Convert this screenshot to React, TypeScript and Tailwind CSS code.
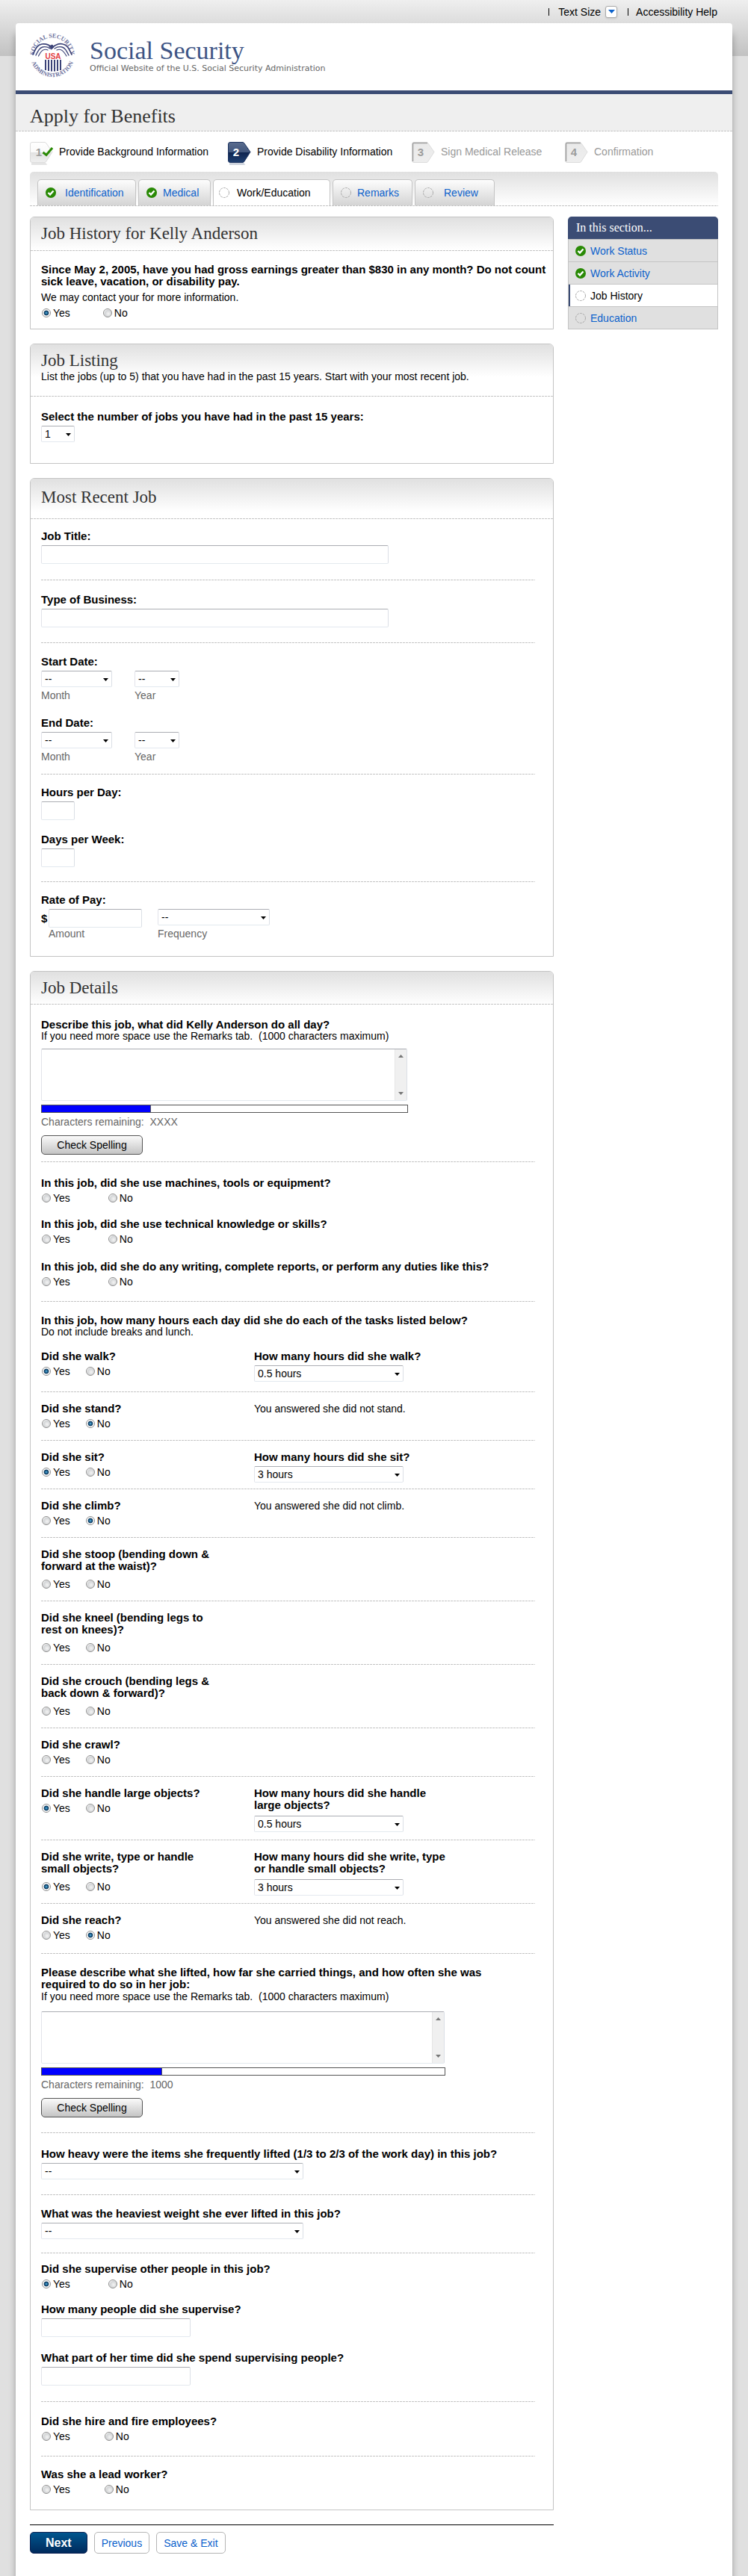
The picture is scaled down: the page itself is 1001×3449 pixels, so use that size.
import React, { useId } from "react";

const cx = (...parts: (string | undefined | false)[]) => parts.filter(Boolean).join(" ");

const DASH = "h-px bg-[repeating-linear-gradient(90deg,#c4c4c4_0_3px,transparent_3px_4px)]";
const BOX =
  "rounded-[2px] border border-t-[#abadb3] border-r-[#dbdfe6] border-b-[#e3e9ef] border-l-[#e2e3ea] bg-white";

function Rule({ className }: { className?: string }) {
  return <div role="separator" className={cx(DASH, className)} />;
}

function Logo() {
  return (
    <svg viewBox="0 0 70 70" className="size-[70px] shrink-0" role="img" aria-label="Social Security Administration seal">
      <defs>
        <path id="sealTop" d="M9.5 35 A24.5 24.5 0 0 1 58.5 35" />
        <path id="sealBottom" d="M4.5 35 A29.8 29.8 0 0 0 64 35" />
      </defs>
      <g fontFamily="Liberation Serif, serif" fontWeight="700" fontSize="8" fill="#6b6f9c">
        <text>
          <textPath href="#sealTop" startOffset="50%" textAnchor="middle">SOCIAL SECURITY</textPath>
        </text>
        <text>
          <textPath href="#sealBottom" startOffset="50%" textAnchor="middle">ADMINISTRATION</textPath>
        </text>
      </g>
      <g stroke="#3c4378" fill="none" strokeLinecap="round">
        <path d="M8 33 C12 25 14 20 20 19 C26 18 30 20 34 24 C38 20 43 18 48 19 C54 20 56 25 60 33" strokeWidth="1.700" />
        <path d="M12 34 C15 28 17 24 21 23 C25 22 28 23 31 25" strokeWidth="1.4" />
        <path d="M15.500 35 C18 30 20 27 23 26.500 C25 26 27 26.500 28 27" strokeWidth="1.200" />
        <path d="M56 34 C53 28 51 24 47 23 C43 22 40 23 37 25" strokeWidth="1.4" />
        <path d="M53 35 C50 30 48 27 45 26.500 C43 26 41 26.500 40 27" strokeWidth="1.200" />
        <path d="M30 22 L34 20 L36 23 L33 26 Z" fill="#3c4378" strokeWidth="1" />
      </g>
      <g fill="#3c4378">
        <path d="M24 40 h2 v14 h-2z M28 40 h2 v15 h-2z M32 40 h2 v15.500 h-2z M36 40 h2 v15.500 h-2z M40 40 h2 v15 h-2z M44 40 h2 v14 h-2z" />
      </g>
      <text x="35" y="38.500" textAnchor="middle" fontFamily="Liberation Sans, sans-serif" fontWeight="700" fontSize="10" fill="#e23b3f">
        USA
      </text>
    </svg>
  );
}

function DoneIcon() {
  return (
    <svg viewBox="0 0 14 14" className="size-3.5 shrink-0" aria-hidden="true">
      <circle cx="7" cy="7" r="7" fill="#2a8a06" />
      <path d="M3.500 7 L6 9.500 L10.500 4.500" fill="none" stroke="#fff" strokeWidth="2.400" />
    </svg>
  );
}

function PendingIcon() {
  return (
    <svg viewBox="0 0 14 14" className="size-3.5 shrink-0" aria-hidden="true">
      <circle cx="7" cy="7" r="6.500" fill="none" stroke="#aaa" strokeDasharray="3 1.100" />
    </svg>
  );
}

type StepState = "done" | "current" | "todo";

function StepIcon({ n, state }: { n: number; state: StepState }) {
  const id = "step" + n;
  const current = state === "current";
  return (
    <svg viewBox="0 0 31 31" className="size-[31px] shrink-0" aria-hidden="true">
      <defs>
        <linearGradient id={id} x1="0" y1="0" x2="0" y2="1">
          <stop offset="0" stopColor={current ? "#5a6c8e" : state === "done" ? "#fff" : "#e9e9e9"} />
          <stop offset=".5" stopColor={current ? "#40557c" : state === "done" ? "#fafafa" : "#ececec"} />
          <stop offset=".51" stopColor={current ? "#0f2550" : state === "done" ? "#e2e2e2" : "#ececec"} />
          <stop offset="1" stopColor={current ? "#1f3f70" : state === "done" ? "#f0f0f0" : "#eee"} />
        </linearGradient>
      </defs>
      {state !== "todo" && <path d="M2 28.500 H21 L23.500 30.500 H2 Z" fill={current ? "#b9c1cf" : "#d9d9d9"} />}
      <path
        d="M3 .5 H20 L21.500 1.300 L30 13.500 L21.500 26.700 L20 27.500 H3 Q.5 27.500 .5 25 V3 Q.5 .5 3 .5 Z"
        fill={`url(#${id})`}
        stroke={current ? "#1d3460" : "#dcdcdc"}
      />
      {state === "todo" && <path d="M21 1.500 H2.500 Q1.500 1.500 1.500 3 V26" fill="none" stroke="#a3a3a3" strokeWidth="1.600" />}
      <text
        x={state === "current" ? 11 : 12}
        y="19"
        textAnchor="middle"
        fontFamily="Liberation Sans, sans-serif"
        fontWeight="700"
        fontSize="15"
        fill={current ? "#fff" : "#9c9c9c"}
      >
        {n}
      </text>
      {state === "done" && <path d="M17.500 14 L22 17.500 L30 8" fill="none" stroke="#2a8a06" strokeWidth="3" />}
    </svg>
  );
}

function Radio({ name, value, checked }: { name: string; value: string; checked?: boolean }) {
  return (
    <label className="flex items-center gap-[3px]">
      <input
        type="radio"
        name={name}
        value={value}
        defaultChecked={checked}
        className="size-3 appearance-none rounded-full border border-[#8f8f8f] bg-[radial-gradient(circle_at_60%_60%,#f4f4f4_0%,#d2d4d6_55%,#fff_75%)] checked:bg-[radial-gradient(circle,#5cc0ee_0,#1c5a86_25%,#10395c_45%,#f4f4f4_52%,#fff_70%)]"
      />
      {value}
    </label>
  );
}

function YesNo({ label, answer, gap }: { label: string; answer?: "Yes" | "No"; gap: string }) {
  const name = useId();
  return (
    <div role="radiogroup" aria-label={label} className={cx("flex h-5 items-center pl-px", gap)}>
      <Radio name={name} value="Yes" checked={answer === "Yes"} />
      <Radio name={name} value="No" checked={answer === "No"} />
    </div>
  );
}

function Question({ text, answer, gap, className }: { text: string; answer?: "Yes" | "No"; gap: string; className?: string }) {
  return (
    <div className={cx("flex flex-col gap-0.5", className)}>
      <p className="text-[15px] leading-4 font-bold">{text}</p>
      <YesNo label={text} answer={answer} gap={gap} />
    </div>
  );
}

function Select({ id, value, width, label }: { id?: string; value: string; width: string; label?: string }) {
  return (
    <div className={cx("relative", width)}>
      <select id={id} aria-label={label} defaultValue={value} className={cx(BOX, "block h-[22px] w-full appearance-none pl-1 text-sm leading-5")}>
        <option>{value}</option>
      </select>
      <svg viewBox="0 0 7 4" className="pointer-events-none absolute top-[10px] right-[5px] h-1 w-[7px]" aria-hidden="true">
        <path d="M0 0 H7 L3.500 4 Z" />
      </svg>
    </div>
  );
}

function Label({ htmlFor, children }: { htmlFor?: string; children: React.ReactNode }) {
  return (
    <label htmlFor={htmlFor} className="block text-[15px] leading-4 font-bold">
      {children}
    </label>
  );
}

function TextField({ label, width }: { label: string; width: string }) {
  const id = useId();
  return (
    <div className="flex flex-col gap-1">
      <Label htmlFor={id}>{label}</Label>
      <input id={id} type="text" className={cx(BOX, "h-[25px] px-1", width)} />
    </div>
  );
}

function SelectField({ label, value, width, className }: { label: string; value: string; width: string; className?: string }) {
  const id = useId();
  return (
    <div className={cx("flex flex-col gap-1", className)}>
      <Label htmlFor={id}>{label}</Label>
      <Select id={id} value={value} width={width} />
    </div>
  );
}

function Captioned({ value, width, caption, group }: { value: string; width: string; caption: string; group: string }) {
  return (
    <div className="flex flex-col gap-[3px]">
      <Select value={value} width={width} label={group + " " + caption} />
      <span className="leading-4 text-[#666]">{caption}</span>
    </div>
  );
}

function DateField({ label }: { label: string }) {
  return (
    <fieldset>
      <legend className="mb-1 text-[15px] leading-4 font-bold">{label}</legend>
      <div className="flex gap-[30px]">
        <Captioned group={label} value="--" width="w-[95px]" caption="Month" />
        <Captioned group={label} value="--" width="w-[60px]" caption="Year" />
      </div>
    </fieldset>
  );
}

function LongAnswer({ label, remaining, width, fill }: { label: string; remaining: string; width: string; fill: string }) {
  return (
    <div className={cx("max-w-full", width)}>
      <div className={cx(BOX, "mr-px flex h-[70px]")}>
        <textarea aria-label={label} className="block flex-1 resize-none px-1 outline-none" />
        <div className="flex w-4 flex-col items-center justify-between border-l border-[#e6e6e6] bg-[#f0f0f0] py-[7px]">
          <svg viewBox="0 0 7 4" className="h-1 w-[7px]" aria-hidden="true">
            <path d="M0 4 H7 L3.500 0 Z" fill="#777" />
          </svg>
          <svg viewBox="0 0 7 4" className="h-1 w-[7px]" aria-hidden="true">
            <path d="M0 0 H7 L3.500 4 Z" fill="#777" />
          </svg>
        </div>
      </div>
      <div className="mt-[5px] h-[11px] border border-[#555] bg-white">
        <div className={cx("h-full border-r border-[#555] bg-[#0000ff]", fill)} />
      </div>
      <p className="mt-1 leading-4 whitespace-pre text-[#666]">{"Characters remaining:  " + remaining}</p>
      <button
        type="button"
        className="mt-2.5 block h-[26px] w-[136px] rounded-[5px] border border-[#555] bg-[linear-gradient(#fafafa,#c4c4c4)] text-sm leading-none"
      >
        Check Spelling
      </button>
    </div>
  );
}

function Panel({ title, note, head, children }: { title: string; note?: string; head: string; children: React.ReactNode }) {
  return (
    <section className="rounded-t-[6px] border border-[#c4c4c4] bg-white">
      <header className={cx("rounded-t-[5px] bg-[linear-gradient(#e0e0e0,#fff_44px)] px-3.5", head)}>
        <h2 className="font-[Liberation_Serif,serif] text-[23px] leading-[26px] text-[#333]">{title}</h2>
        {note && <p className="leading-4">{note}</p>}
      </header>
      <Rule />
      <div className="pr-6 pl-3.5">{children}</div>
    </section>
  );
}

type Task = {
  question: string;
  answer?: "Yes" | "No";
  follow?: string;
  hours?: string;
  reply?: string;
  height?: string;
};

const tasks: Task[] = [
  { question: "Did she walk?", answer: "Yes", follow: "How many hours did she walk?", hours: "0.5 hours", height: "min-h-[69px]" },
  { question: "Did she stand?", answer: "No", reply: "You answered she did not stand." },
  { question: "Did she sit?", answer: "Yes", follow: "How many hours did she sit?", hours: "3 hours" },
  { question: "Did she climb?", answer: "No", reply: "You answered she did not climb." },
  { question: "Did she stoop (bending down &\nforward at the waist)?" },
  { question: "Did she kneel (bending legs to\nrest on knees)?" },
  { question: "Did she crouch (bending legs &\nback down & forward)?" },
  { question: "Did she crawl?" },
  { question: "Did she handle large objects?", answer: "Yes", follow: "How many hours did she handle\nlarge objects?", hours: "0.5 hours" },
  { question: "Did she write, type or handle\nsmall objects?", answer: "Yes", follow: "How many hours did she write, type\nor handle small objects?", hours: "3 hours" },
  { question: "Did she reach?", answer: "No", reply: "You answered she did not reach.", height: "min-h-[66px]" },
];

function TaskRow({ question, answer, follow, hours, reply, height }: Task) {
  const id = useId();
  const twoLines = question.includes("\n") || !!follow?.includes("\n");
  return (
    <>
      <div className={cx("grid grid-cols-[285px_1fr] content-start pt-3.5", height ?? (twoLines ? "min-h-[84px]" : "min-h-16"))}>
        <div className={cx("flex flex-col", question.includes("\n") ? "gap-1.5" : "gap-0.5")}>
          <p className="text-[15px] leading-4 font-bold whitespace-pre-line">{question}</p>
          <YesNo label={question} answer={answer} gap="gap-[21px]" />
        </div>
        {follow && hours && (
          <div className={cx("flex flex-col", twoLines ? "gap-1.5" : "gap-1")}>
            <label htmlFor={id} className="text-[15px] leading-4 font-bold whitespace-pre-line">
              {follow}
            </label>
            <Select id={id} value={hours} width="w-[200px]" />
          </div>
        )}
        {reply && <p className="leading-4">{reply}</p>}
      </div>
      <Rule />
    </>
  );
}

const steps: { label: string; state: StepState; width: string }[] = [
  { label: "Provide Background Information", state: "done", width: "w-[265px]" },
  { label: "Provide Disability Information", state: "current", width: "w-[246px]" },
  { label: "Sign Medical Release", state: "todo", width: "w-[205px]" },
  { label: "Confirmation", state: "todo", width: "w-[130px]" },
];

const tabs = [
  { label: "Identification", done: true, box: "w-[132px] gap-3 pl-2.5" },
  { label: "Medical", done: true, box: "w-[97px] gap-2 pl-2.5" },
  { label: "Work/Education", active: true, box: "w-[157px] gap-2.5 pl-[7px]" },
  { label: "Remarks", box: "w-[107px] gap-2 pl-2.5" },
  { label: "Review", box: "w-[107px] gap-3.5 pl-2.5" },
];

const sections = [
  { label: "Work Status", done: true },
  { label: "Work Activity", done: true },
  { label: "Job History", active: true },
  { label: "Education" },
];

export default function App() {
  return (
    <div className="min-h-screen bg-[#e0e0e0] bg-[linear-gradient(#efefef,#c2c2c2)] bg-[length:100%_75px] bg-no-repeat px-[21px] font-[Liberation_Sans,Arial,sans-serif] text-sm text-black">
      <nav aria-label="Page tools" className="flex h-[31px] items-center justify-end pr-5">
        <span className="h-2.5 w-px bg-black" />
        <button type="button" className="ml-3 flex items-center gap-1.5">
          Text Size
          <span className="flex h-4 w-4 items-center justify-center rounded-[3px] border border-[#aaa] bg-white shadow-sm">
            <svg viewBox="0 0 9 5" className="h-[5px] w-[9px]" aria-hidden="true">
              <path d="M0 0 H9 L4.500 5 Z" fill="#0b62cc" />
            </svg>
          </span>
        </button>
        <span className="mr-2.5 ml-3.5 h-2.5 w-px bg-black" />
        <a href="#help">Accessibility Help</a>
      </nav>

      <div className="min-h-[calc(100vh-31px)] rounded-t-[4px] bg-white pb-[30px] shadow-[0_14px_10px_rgba(0,0,0,0.3)]">
        <header className="flex h-[90px] pt-[9px] pl-[15px]">
          <Logo />
          <div className="pt-[11px] pl-3.5">
            <p className="font-[Liberation_Serif,serif] text-[34px] leading-[34px] text-[#3d5485]">Social Security</p>
            <p className="font-[DejaVu_Sans,Verdana,sans-serif] text-[11px] leading-[14px] text-[#666]">
              Official Website of the U.S. Social Security Administration
            </p>
          </div>
        </header>
        <div className="h-[5px] bg-[#3b4c74]" />
        <div className="flex h-[49px] items-center bg-[#efefef] pt-2.5 pl-[19px]">
          <h1 className="font-[Liberation_Serif,serif] text-[26px] leading-8 text-[#333]">Apply for Benefits</h1>
        </div>
        <Rule />

        <div className="px-[19px]">
          <ol className="flex pt-3.5">
            {steps.map((s, i) => (
              <li key={s.label} className={cx("flex h-[31px] gap-2", s.width, s.state === "todo" && "text-[#999]")}>
                <StepIcon n={i + 1} state={s.state} />
                <span className="pt-1 leading-[18px] whitespace-nowrap">{s.label}</span>
              </li>
            ))}
          </ol>

          <nav aria-label="Application sections" className="mt-[9px] rounded-t-[5px] bg-[linear-gradient(#e0e0e0,#fff)] pt-2.5 pl-2.5">
            <div className="flex gap-[3px]">
              {tabs.map((t) => (
                <a
                  key={t.label}
                  href={"#" + t.label}
                  aria-current={t.active ? "page" : undefined}
                  className={cx(
                    "flex h-[35px] items-center rounded-t-[5px] border border-b-0 border-[#c4c4c4]",
                    t.box,
                    t.active ? "bg-white text-black" : "bg-[linear-gradient(#fdfdfd,#d4d4d4)] text-[#0b62cc]"
                  )}
                >
                  {t.done ? <DoneIcon /> : <PendingIcon />}
                  {t.label}
                </a>
              ))}
            </div>
          </nav>
          <Rule />

          <div className="mt-3.5 flex items-start justify-between gap-[19px]">
            <main className="flex max-w-[701px] flex-1 flex-col gap-[19px]">
              <Panel title="Job History for Kelly Anderson" head="h-11 pt-[9px]">
                <div className="-mr-5 pt-[17px] pb-[11px]">
                  <p className="text-[15px] leading-4 font-bold">
                    Since May 2, 2005, have you had gross earnings greater than $830 in any month? Do not count
                    <br />
                    sick leave, vacation, or disability pay.
                  </p>
                  <p className="mt-[3px] leading-5">We may contact your for more information.</p>
                  <div className="mt-px">
                    <YesNo label="Gross earnings" answer="Yes" gap="gap-[44px]" />
                  </div>
                </div>
              </Panel>

              <Panel title="Job Listing" note="List the jobs (up to 5) that you have had in the past 15 years. Start with your most recent job." head="h-[69px] pt-[9px]">
                <div className="pt-[19px] pb-[28px]">
                  <SelectField label="Select the number of jobs you have had in the past 15 years:" value="1" width="w-[45px]" />
                </div>
              </Panel>

              <Panel title="Most Recent Job" head="h-[53px] pt-3">
                <div className="pt-[15px] pb-[22px]">
                  <TextField label="Job Title:" width="w-[465px]" />
                  <Rule className="mt-[21px] mb-[18px]" />
                  <TextField label="Type of Business:" width="w-[465px]" />
                  <Rule className="mt-5 mb-[17px]" />
                  <div className="flex flex-col gap-[21px]">
                    <DateField label="Start Date:" />
                    <DateField label="End Date:" />
                  </div>
                  <Rule className="mt-[15px] mb-4" />
                  <div className="flex flex-col gap-[18px]">
                    <TextField label="Hours per Day:" width="w-[45px]" />
                    <TextField label="Days per Week:" width="w-[45px]" />
                  </div>
                  <Rule className="mt-[19px] mb-4" />
                  <fieldset>
                    <legend className="mb-1 text-[15px] leading-4 font-bold">Rate of Pay:</legend>
                    <div className="flex">
                      <span className="w-2.5 text-[15px] leading-[25px] font-bold">$</span>
                      <div className="flex w-[146px] flex-col">
                        <input id="amount" type="text" className={cx(BOX, "h-[25px] w-[125px] px-1")} />
                        <label htmlFor="amount" className="leading-4 text-[#666]">
                          Amount
                        </label>
                      </div>
                      <Captioned group="Pay" value="--" width="w-[150px]" caption="Frequency" />
                    </div>
                  </fieldset>
                </div>
              </Panel>

              <Panel title="Job Details" head="h-[43px] pt-[9px]">
                <div className="pt-[19px] pb-[17px]">
                  <p className="text-[15px] leading-4 font-bold">Describe this job, what did Kelly Anderson do all day?</p>
                  <p className="mb-2.5 leading-[14px] whitespace-pre">{"If you need more space use the Remarks tab.  (1000 characters maximum)"}</p>
                  <LongAnswer label="Describe this job" remaining="XXXX" width="w-[491px]" fill="w-[146px]" />
                  <Rule className="mt-[9px] mb-5" />

                  <Question text="In this job, did she use machines, tools or equipment?" gap="gap-[51px]" />
                  <Question text="In this job, did she use technical knowledge or skills?" gap="gap-[51px]" className="mt-[17px]" />
                  <Question text="In this job, did she do any writing, complete reports, or perform any duties like this?" gap="gap-[51px]" className="mt-[19px]" />
                  <Rule className="mt-4 mb-[17px]" />

                  <p className="text-[15px] leading-4 font-bold">In this job, how many hours each day did she do each of the tasks listed below?</p>
                  <p className="mb-1 leading-[14px]">Do not include breaks and lunch.</p>
                  {tasks.map((t) => (
                    <TaskRow key={t.question} {...t} />
                  ))}

                  <p className="mt-[17px] text-[15px] leading-4 font-bold">
                    Please describe what she lifted, how far she carried things, and how often she was
                    <br />
                    required to do so in her job:
                  </p>
                  <p className="mb-3 leading-4 whitespace-pre">{"If you need more space use the Remarks tab.  (1000 characters maximum)"}</p>
                  <LongAnswer label="Describe lifting and carrying" remaining="1000" width="w-[541px]" fill="w-[161px]" />
                  <Rule className="mt-5 mb-5" />

                  <SelectField label="How heavy were the items she frequently lifted (1/3 to 2/3 of the work day) in this job?" value="--" width="w-[351px]" />
                  <Rule className="mt-5 mb-[17px]" />
                  <SelectField label="What was the heaviest weight she ever lifted in this job?" value="--" width="w-[351px]" />
                  <Rule className="mt-[18px] mb-[13px]" />

                  <Question text="Did she supervise other people in this job?" answer="Yes" gap="gap-[51px]" />
                  <div className="mt-4 flex flex-col gap-5">
                    <TextField label="How many people did she supervise?" width="w-[200px]" />
                    <TextField label="What part of her time did she spend supervising people?" width="w-[200px]" />
                  </div>
                  <Rule className="mt-[21px] mb-[18px]" />
                  <Question text="Did she hire and fire employees?" gap="gap-[46px]" />
                  <Rule className="mt-4 mb-4" />
                  <Question text="Was she a lead worker?" gap="gap-[46px]" />
                </div>
              </Panel>

              <div className="flex gap-[9px] border-t border-black pt-[9px]">
                <button
                  type="button"
                  className="h-[29px] rounded-[5px] border border-[#0a1f52] bg-[linear-gradient(#00568f,#002a5c)] px-5 text-base font-bold text-white"
                >
                  Next
                </button>
                <button type="button" className="h-[29px] rounded-[5px] border border-[#b5b5b5] bg-white px-[9px] text-[#0b62cc]">
                  Previous
                </button>
                <button type="button" className="h-[29px] rounded-[5px] border border-[#b5b5b5] bg-white px-[9px] text-[#0b62cc]">
                  Save &amp; Exit
                </button>
              </div>
            </main>

            <aside className="w-[201px]">
              <h2 className="rounded-t-[5px] bg-[#3b4c74] pl-[11px] font-[Liberation_Serif,serif] text-base leading-[30px] text-white">In this section...</h2>
              <ul className="border-x border-b border-[#c4c4c4]">
                {sections.map((s) => (
                  <li key={s.label} className="border-t border-[#c4c4c4]">
                    <a
                      href={"#" + s.label}
                      aria-current={s.active ? "page" : undefined}
                      className={cx(
                        "flex h-[29px] items-center gap-1.5",
                        s.active ? "border-l-2 border-[#3b4c74] bg-white pl-[7px] text-black" : "bg-[#e0e0e0] pl-[9px] text-[#0b62cc]"
                      )}
                    >
                      {s.done ? <DoneIcon /> : <PendingIcon />}
                      {s.label}
                    </a>
                  </li>
                ))}
              </ul>
            </aside>
          </div>
        </div>
      </div>
    </div>
  );
}
